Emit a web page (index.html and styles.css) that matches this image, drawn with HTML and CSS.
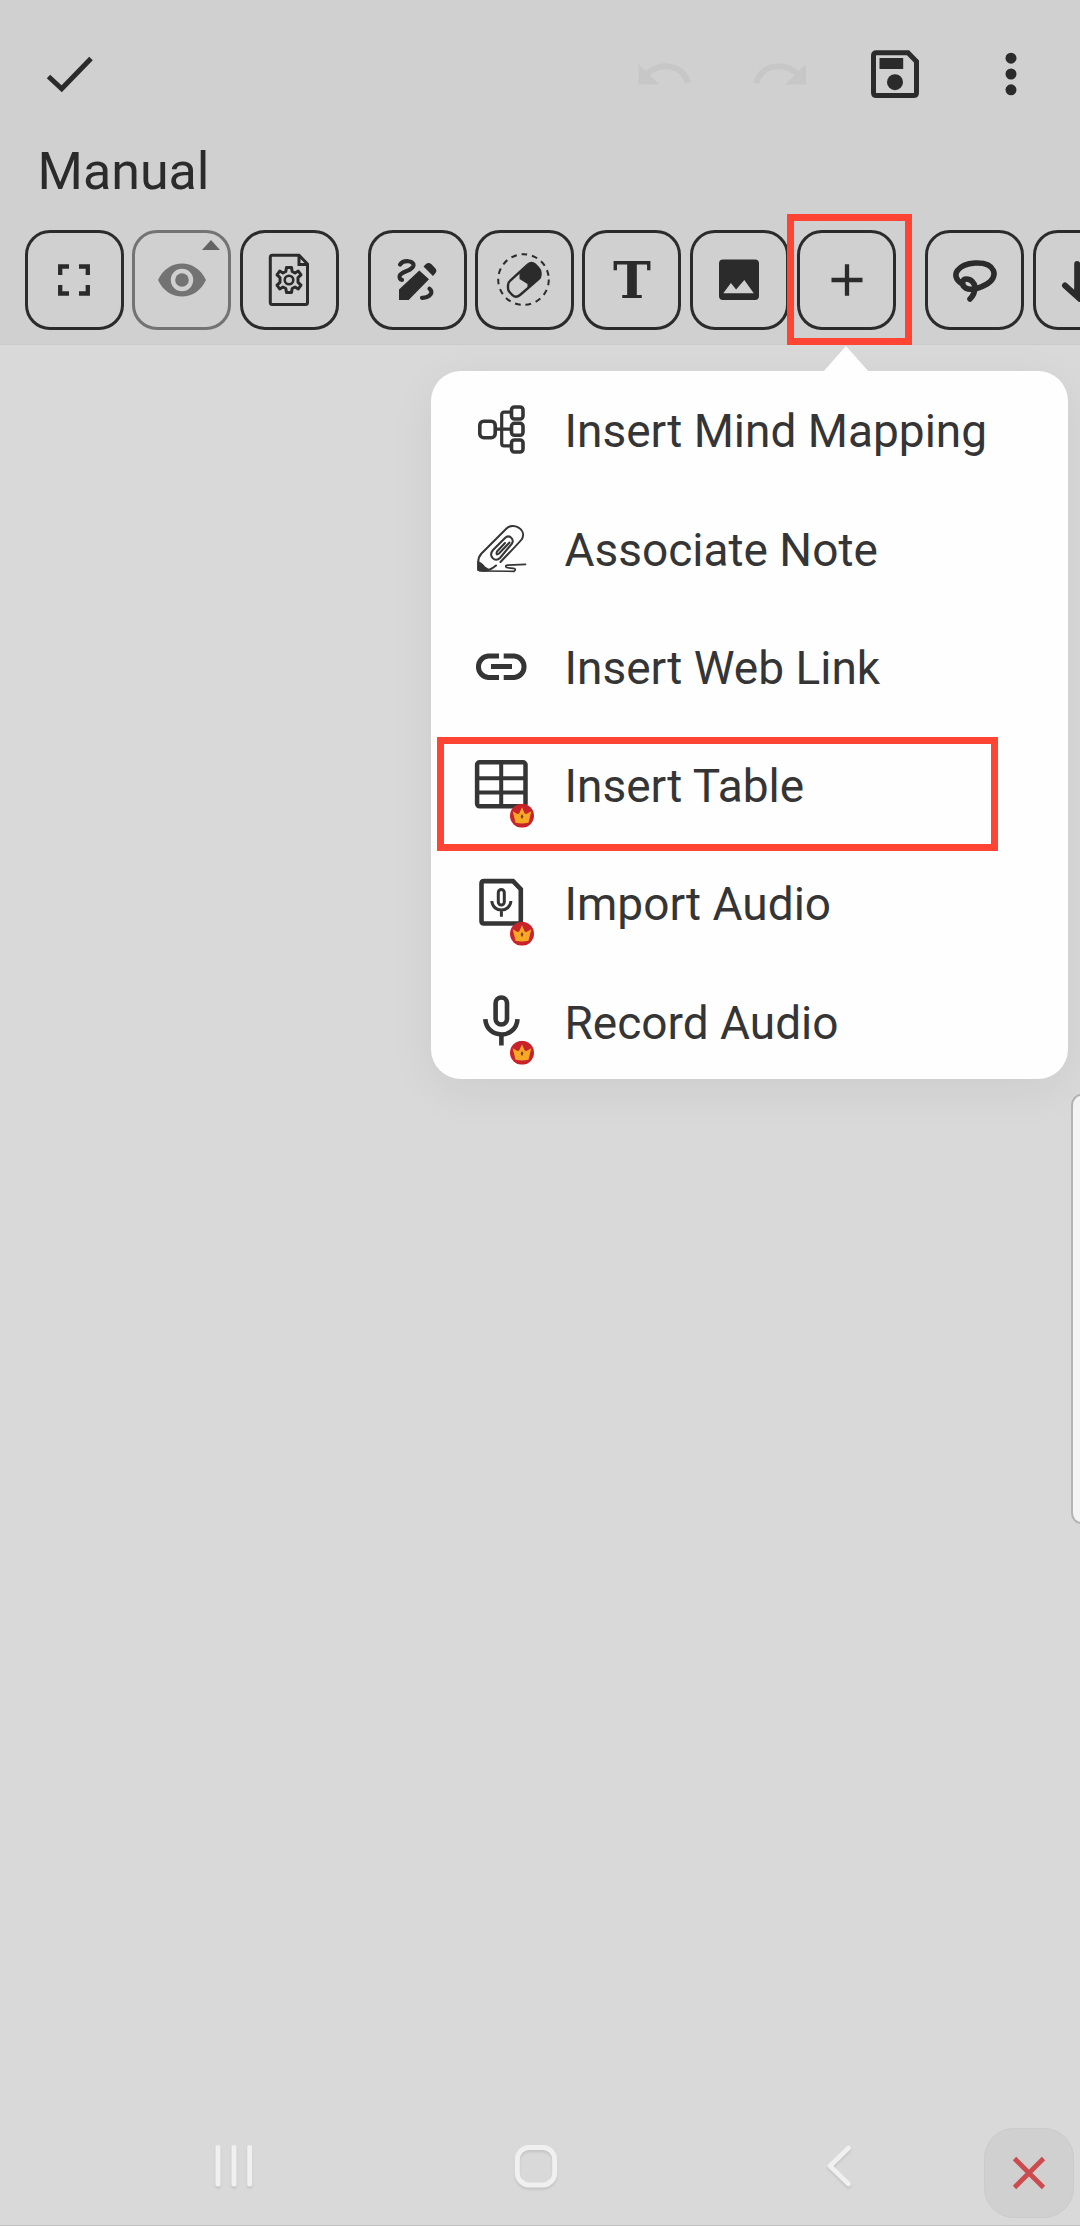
FILE: index.html
```html
<!DOCTYPE html>
<html lang="en">
<head>
<meta charset="utf-8">
<title>Manual</title>
<link rel="stylesheet" href="styles.css">
</head>
<body>
<svg class="defs" width="0" height="0" aria-hidden="true">
  <symbol id="crown" viewBox="-12 -12 24 24">
    <circle r="12" fill="#c8232b"/>
    <path d="M-9.300-4.500-4.600-1.800-2.800-2.200 0-8.500 2.600-2.200 4.400-1.800 9.300-4.500 6.500 7Q0 8.600-6.500 7Z" fill="#f9a825"/>
    <path d="M0-1.800 1.400.8 0 3.400-1.400.8Z" fill="#7a3b12"/>
  </symbol>
</svg>
<div class="screen">
  <header class="header">
    <div class="appbar">
      <svg class="ico" viewBox="-30 -30 60 60"><path d="M-21.500 2.500-8.300 14.800 21-15.500" class="line" stroke-width="5"/></svg>
      <div class="actions">
        <svg class="ico faded" viewBox="-30 -30 60 60"><path d="M-26.500-10V10.500H-5.500Z"/><path d="M-19 1C-6-12 17-11 23 9" class="line" stroke-width="6"/></svg>
        <svg class="ico faded" viewBox="-30 -30 60 60"><path d="M26-10V10.500H5Z"/><path d="M18.500 1C5.500-12-17.500-11-24 9" class="line" stroke-width="6"/></svg>
        <svg class="ico" viewBox="-30 -30 60 60"><path d="M-18.500-21.200H13L21.500-12.500V18.500Q21.500 21.500 18.500 21.500H-18.500Q-21.500 21.500-21.500 18.500V-18.200Q-21.500-21.200-18.500-21.200Z" class="line" stroke-width="5"/><path d="M-15.500-16H8.200V-5H-15.500Z"/><circle cy="8.200" r="8"/></svg>
        <svg class="ico" viewBox="-30 -30 60 60"><circle cy="-15.800" r="5.500"/><circle r="5.500"/><circle cy="15.800" r="5.500"/></svg>
      </div>
    </div>
    <h1 class="title">Manual</h1>
    <div class="toolbar">
      <div class="group">
        <div class="tool"><svg class="ico" viewBox="-30 -30 60 60"><path d="M-13.800-5V-13.500H-5M5-13.500H13.800V-5M13.800 5V13.500H5M-5 13.500H-13.800V5" class="line" stroke-width="4.300"/></svg></div>
        <div class="tool muted"><svg class="ico" viewBox="-30 -30 60 60"><path fill-rule="evenodd" d="M-24 0C-14-22 14-22 24 0 14 22-14 22-24 0ZM0-11.200A11.200 11.200 0 1 0 0 11.200 11.200 11.200 0 1 0 0-11.200Z"/><circle r="6.800"/></svg><span class="caret"></span></div>
        <div class="tool"><svg class="ico" viewBox="-30 -30 60 60"><path d="M-16.700-24.800H10L18.500-16V22.500Q18.500 24.500 16.500 24.500H-16.700Q-18.700 24.500-18.700 22.500V-22.800Q-18.700-24.800-16.700-24.800ZM10-24.500V-15.500H18.500" class="line" stroke-width="3"/><path d="M-2.500-12.500H2.500L3.200-8.500 6-7 9.300-9 12-5.200 9-2.300V2.300L12 5.200 9.300 9 6 7 3.200 8.500 2.500 12.500H-2.500L-3.200 8.500-6 7-9.300 9-12 5.200-9 2.300V-2.300L-12-5.200-9.300-9-6-7-3.200-8.500Z" class="line round" stroke-width="3"/><circle r="4.300" class="line" stroke-width="2.600"/></svg></div>
      </div>
      <div class="group">
        <div class="tool"><svg class="ico" viewBox="-30 -30 60 60"><path d="M-18 9.600 2.300-9.400 12-.8-8.300 20H-18ZM6.500-13.500 9-16Q11.700-18 14.500-15.700L18-12Q20.500-9.500 18.500-7L16-4.100Z"/><path d="M-17-15.400C-13.700-20.400-3-19.600-3.500-14.700-4.500-8.800-15.500-9-17.200-4.400-18-2-17-.4-15-.2M12.500 8.800C17 12 13 18 5 17.800" class="line round" stroke-width="4.200"/></svg></div>
        <div class="tool"><svg class="ico" viewBox="-30 -30 60 60"><circle cx="-.5" cy="-.4" r="25.300" class="line" stroke-width="2" stroke-dasharray="5.700 4.890"/><path d="M-14 .8 4-15.500Q7.500-18.500 11-15.500L14.500-12Q16.500-10 16.500-7V-5Q16.500-2.500 14.500-.8L-4 15Q-8 18.500-11.500 15.200L-14.500 12Q-16 10.500-16 8V5Q-16 2.500-14 .8Z" class="line" stroke-width="2.400"/><path d="M-4.500-8 4-16Q8-19 11.500-15.500L15-12Q17.500-10 17-5 17-2 14.500-.5L3.500 8.300V4L-4.500-1Z"/></svg></div>
        <div class="tool"><span class="letter">T</span></div>
        <div class="tool"><svg class="ico" viewBox="-30 -30 60 60"><path fill-rule="evenodd" d="M-16-20.400H16Q20-20.400 20-16.400V16Q20 20 16 20H-16Q-20 20-20 16V-16.400Q-20-20.400-16-20.400ZM-15.700 13.200H14.800L5.300-.1-2.900 9.600-8.100 3Z"/></svg></div>
        <div class="tool"><svg class="ico" viewBox="-30 -30 60 60"><path d="M-15.500 0H15.500M0-15.700V15.700" class="line" stroke-width="4.300"/></svg></div>
      </div>
      <div class="group">
        <div class="tool"><svg class="ico" viewBox="-30 -30 60 60"><path d="M-13.500 3.500C-26-5-16-16 0-17 21-18 24-3 12 4 3 9-4 11-9.500 8-14 5-13-1-8.500-1-4-1-.5 3 0 7 0 12-2 16-5 19" class="line round" stroke-width="5.600"/></svg></div>
        <div class="tool"><svg class="ico" viewBox="-30 -30 60 60"><path d="M-4.800-16V15M-17 5.500-2 19 14 5.500" class="line round" stroke-width="6"/><path d="M-8 8H3V20Z"/></svg></div>
      </div>
    </div>
  </header>

  <main class="canvas">
    <div class="side-handle"></div>
  </main>

  <nav class="navbar">
    <svg class="nav-ico" viewBox="-25 -25 50 50"><path d="M-16-18.500V18M0-18.500V18M15.700-18.500V18" stroke-width="5"/></svg>
    <svg class="nav-ico" viewBox="-25 -25 50 50"><rect x="-18.700" y="-18.500" width="37.400" height="37.400" rx="12" stroke-width="5"/></svg>
    <svg class="nav-ico" viewBox="-25 -25 50 50"><path d="M9.500-18-9 0 9.500 18" stroke-width="4.600"/></svg>
  </nav>

  <div class="menu">
    <div class="item"><svg class="item-ico" viewBox="-35 -45 70 90"><g class="line" stroke-width="3.600"><rect x="-21.200" y="-9.800" width="15.400" height="16.500" rx="4"/><rect x="10.500" y="-24" width="11.500" height="12" rx="3"/><rect x="10.500" y="-7.700" width="11.500" height="12" rx="3"/><rect x="10.500" y="9" width="11.500" height="12" rx="3"/><path d="M-5.800-1.900H10.500M10.500-18.800H3Q.7-18.800.7-16.500V12.500Q.7 14.800 3 14.800H10.500" stroke-width="3.200"/></g></svg><span>Insert Mind Mapping</span></div>
    <div class="item"><svg class="item-ico" viewBox="-35 -45 70 90"><g class="line round" stroke-width="2"><path d="M-22.800 20V12Q-22.800 7-19.500 3.500L5.500-21.500C12-28 26-21 21-11 17-6 7 4-.5 12M-5 15.500Q-11 20.500-16 20.500H-21.500"/><path d="M11-6.500-1 8C-6 13-13 6-8 0L4-12C8-16 13.500-11 11-6.500ZM8.500-7.500-2 3.500Q-5.500 6-4 1.500L4-7"/><path d="M-18 21 13 21.300Q16 19 12.300 18.400L6.300 17.700Q3 16 6.300 15.200L24.500 14.400" stroke-width="1.700"/></g><path d="M-23.500 11Q-19 12-16 16.500L-12 19-17 21.500H-21Q-23.800 21-23.800 18Z"/></svg><span>Associate Note</span></div>
    <div class="item"><svg class="item-ico" viewBox="-35 -45 70 90"><path d="M-2-12H-12.800A10.800 10.800 0 0 0-12.800 9.500H-2M2.700-12H13.300A10.800 10.800 0 0 1 13.300 9.500H2.700M-10-1.600H11" class="line" stroke-width="5"/></svg><span>Insert Web Link</span></div>
    <div class="item"><svg class="item-ico" viewBox="-35 -45 70 90"><rect x="-23.900" y="-23.700" width="48.400" height="44" rx="2.500" class="line" stroke-width="4.500"/><path d="M.2-23V20M-23-7.800H24M-23 6.500H24" class="line" stroke-width="4"/><use href="#crown" x="9" y="17.800" width="24" height="24"/></svg><span>Insert Table</span></div>
    <div class="item"><svg class="item-ico" viewBox="-35 -45 70 90"><path d="M-17-22.900H12L19.800-14.800V19.500H-17Q-19.500 19.500-19.500 17V-20.400Q-19.500-22.900-17-22.900Z" class="line" stroke-width="4.600"/><rect x="-2.700" y="-14.500" width="6" height="15.500" rx="3" class="line" stroke-width="3"/><path d="M-9.200-3C-8.500 9 9.200 9 9.900-3M.4 6V12.800" class="line" stroke-width="3"/><use href="#crown" x="9" y="17.800" width="24" height="24"/></svg><span>Import Audio</span></div>
    <div class="item"><svg class="item-ico" viewBox="-35 -45 70 90"><rect x="-5.400" y="-25.500" width="11.400" height="27" rx="5.700" class="line" stroke-width="4.600"/><path d="M-15.700-3.800C-14.500 16.500 15.300 16.500 16.500-3.800M.4 11V22.500" class="line" stroke-width="4.600"/><use href="#crown" x="9" y="17.800" width="24" height="24"/></svg><span>Record Audio</span></div>
  </div>
  <div class="mark mark-plus"></div>
  <div class="mark mark-table"></div>
  <div class="close"><svg class="close-ico" viewBox="-20 -20 40 40"><path d="M-14.500-14.500 14.500 14.500M14.500-14.500-14.500 14.500"/></svg></div>
</div>
</body>
</html>
```
FILE: styles.css
```css
* { box-sizing: border-box; }
body { margin: 0; font-family: Roboto, "Liberation Sans", sans-serif; color: #2b2b2b; }
svg { display: block; flex: none; fill: currentColor; }
.defs { position: absolute; }
.line { fill: none; stroke: currentColor; }
.round { stroke-linecap: round; stroke-linejoin: round; }

.screen {
  position: relative;
  display: flex;
  flex-direction: column;
  width: 1080px;
  height: 2226px;
  overflow: hidden;
  background: #d9d9d9;
  border-bottom: 1px solid #c2c2c2;
}

.header { flex: none; height: 345px; padding-top: 7px; background: #d0d0d0; border-bottom: 1px solid #cbcbcb; }
.appbar { display: flex; justify-content: space-between; align-items: center; height: 133px; padding: 0 39.500px; }
.actions { display: flex; gap: 55.200px; }
.ico { width: 60px; height: 60px; }
.faded { color: #c7c7c7; }
.title { margin: 1.500px 0 0 37.500px; font-size: 52px; line-height: 60px; font-weight: 400; }

.toolbar { display: flex; gap: 29px; margin-top: 28.900px; padding-left: 24.800px; }
.group { display: flex; flex: none; gap: 8.400px; }
.tool {
  position: relative;
  display: flex;
  flex: none;
  align-items: center;
  justify-content: center;
  width: 99px;
  height: 99.500px;
  border: 3px solid currentColor;
  border-radius: 25px;
}
.muted { color: #737373; }
.caret {
  position: absolute;
  top: 7px;
  right: 8px;
  border: 9.500px solid transparent;
  border-top: 0;
  border-bottom: 10px solid #636363;
}
.letter { font: bold 51px/60px "DejaVu Serif", serif; }

.canvas { flex: 1; display: flex; justify-content: flex-end; padding-top: 749px; }
.side-handle {
  width: 10px;
  height: 430px;
  margin-right: -1px;
  border: 2px solid #b3b3b3;
  border-right: 0;
  border-radius: 15px 0 0 15px / 17px 0 0 17px;
  background: #f4f4f4;
}

.navbar { display: flex; flex: none; gap: 252.500px; height: 84px; padding-left: 208.500px; }
.nav-ico {
  width: 50px;
  height: 50px;
  fill: none;
  stroke: #f0f0f0;
  stroke-linecap: round;
  stroke-linejoin: round;
  filter: drop-shadow(0 2px 1px rgba(0, 0, 0, 0.100));
}

.menu {
  position: absolute;
  left: 431.300px;
  top: 370.500px;
  width: 637px;
  height: 708.500px;
  padding-top: 1.600px;
  border-radius: 30px;
  background: #fefefe;
  color: #353535;
  box-shadow: 0 12px 48px rgba(0, 0, 0, 0.060);
}
.menu::before {
  content: "";
  position: absolute;
  left: 391.700px;
  top: -25px;
  border: 23px solid transparent;
  border-top: 0;
  border-bottom: 26px solid #fefefe;
}
.item {
  display: flex;
  align-items: center;
  gap: 28.500px;
  height: 118.300px;
  padding-left: 34.700px;
  font-size: 46px;
  line-height: 56px;
  white-space: nowrap;
}
.item-ico { width: 70px; height: 90px; }

.mark { position: absolute; border: 7px solid #ff4433; }
.mark-plus { left: 787px; top: 214px; width: 125px; height: 131px; }
.mark-table { left: 437px; top: 737px; width: 561px; height: 114px; }

.close {
  position: absolute;
  left: 984px;
  top: 2128px;
  display: flex;
  align-items: center;
  justify-content: center;
  width: 90px;
  height: 90px;
  border: 1px solid #cbcbcb;
  border-radius: 30px;
  background: #d0d0d0;
}
.close-ico { width: 40px; height: 40px; fill: none; stroke: #cc4b4e; stroke-width: 4.800; }
```
